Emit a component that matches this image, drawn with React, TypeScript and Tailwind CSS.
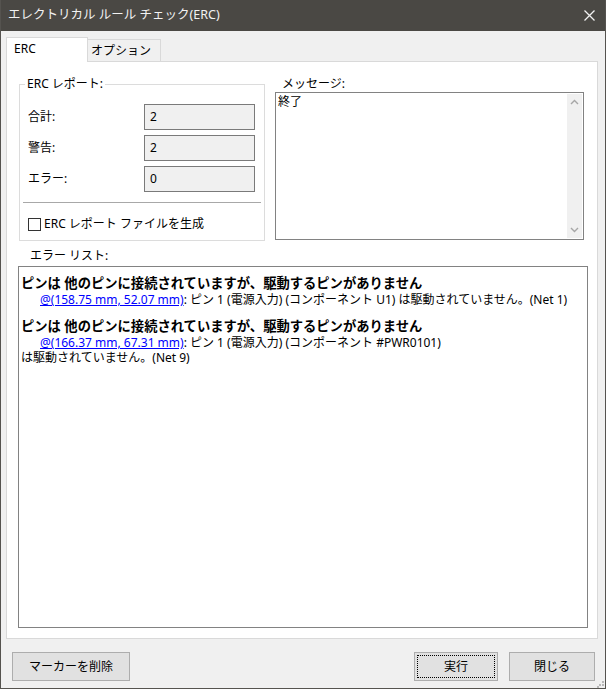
import { ReactNode } from "react";

const font = "font-['Noto_Sans','Noto_Sans_CJK_JP',sans-serif]";

function Chevron({ down }: { down?: boolean }) {
  return (
    <svg width="9" height="6" viewBox="0 0 9 6" className="block">
      <path
        d={down ? "M1 1 L4.5 4.5 L8 1" : "M1 5 L4.5 1.5 L8 5"}
        fill="none"
        stroke="#a6a6a6"
        strokeWidth="1.4"
      />
    </svg>
  );
}

function Field({ label, value }: { label: string; value: string }) {
  return (
    <div className="flex items-center justify-between">
      <span className="text-[12px] leading-[14px] text-black">{label}</span>
      <div className="w-[111px] h-[26px] border border-[#7a7a7a] bg-[#f0f0f0] flex items-center pl-[5px] text-[12px] text-black">
        {value}
      </div>
    </div>
  );
}

function Button({ children, width, focused }: { children: ReactNode; width: string; focused?: boolean }) {
  return (
    <button
      className={`${width} h-[29px] border border-[#adadad] bg-[#e1e1e1] p-[2px] text-[12px] text-black`}
    >
      <div
        className={`w-full h-full flex items-center justify-center ${
          focused ? "border border-dotted border-black" : "border border-transparent"
        }`}
      >
        {children}
      </div>
    </button>
  );
}

const errors = [
  {
    loc: "@(158.75 mm, 52.07 mm)",
    rest: ": ピン 1 (電源入力) (コンポーネント U1) は駆動されていません。(Net 1)",
    tail: "",
  },
  {
    loc: "@(166.37 mm, 67.31 mm)",
    rest: ": ピン 1 (電源入力) (コンポーネント #PWR0101)",
    tail: "は駆動されていません。(Net 9)",
  },
];

export default function App() {
  return (
    <div className={`${font} w-[606px] h-[689px] border border-[#55534f] border-t-0 bg-[#f0f0f0] flex flex-col select-none`}>
      {/* Title bar */}
      <div className="h-[31px] shrink-0 bg-[#4a4844] flex items-center justify-between pl-[7px] pr-[10px]">
        <span className="text-[12.5px] text-[#f2f2f2] leading-none">エレクトリカル ルール チェック(ERC)</span>
        <svg width="11" height="11" viewBox="0 0 11 11">
          <path d="M0.5 0.5 L10.5 10.5 M10.5 0.5 L0.5 10.5" stroke="#f2f2f2" strokeWidth="1.3" />
        </svg>
      </div>

      {/* Tabs */}
      <div className="mt-[6px] ml-[5px] flex items-end h-[24px]">
        <div className="w-[82px] h-[25px] -mb-px relative z-10 bg-white border border-b-0 border-[#d9d9d9] pl-[7px] pt-[3px] text-[12px] leading-[16px] text-black">
          ERC
        </div>
        <div className="w-[73px] h-[22px] bg-[#f0f0f0] border border-l-0 border-b-0 border-[#d9d9d9] pl-[3px] pt-[3px] text-[12px] leading-[16px] text-black">
          オプション
        </div>
      </div>

      {/* Panel */}
      <div className="ml-[5px] w-[592px] h-[578px] shrink-0 bg-white border border-[#d9d9d9] flex flex-col px-[11px] pt-[15px] pb-[10px]">
        <div className="flex gap-[10px]">
          {/* ERC report group */}
          <fieldset className="ml-[1px] w-[246px] h-[164px] border border-[#dcdcdc] px-[8px] flex flex-col">
            <legend className="-ml-[3px] px-[2px] text-[12px] leading-[14px] text-black">ERC レポート:</legend>
            <div className="mt-[13px] flex flex-col gap-[5px] pr-[1px]">
              <Field label="合計:" value="2" />
              <Field label="警告:" value="2" />
              <Field label="エラー:" value="0" />
            </div>
            <div className="mt-[10px] -mx-[5px] h-px shrink-0 bg-[#a8a8a8]" />
            <div className="mt-[14px] flex items-center gap-[3px]">
              <div className="w-[13px] h-[13px] border border-[#333333] bg-white" />
              <span className="text-[12px] leading-[14px] text-black">ERC レポート ファイルを生成</span>
            </div>
          </fieldset>

          {/* Message */}
          <div className="flex flex-col">
            <span className="ml-[7px] text-[12px] leading-[14px] text-black">メッセージ:</span>
            <div className="mt-[1px] w-[309px] h-[148px] border border-[#828282] bg-white flex p-px">
              <div className="flex-1 pl-[1px] pt-[1px] text-[12px] leading-[14px] text-black">終了</div>
              <div className="w-[15px] bg-[#f0f0f0] flex flex-col items-center justify-between py-[5px]">
                <Chevron />
                <Chevron down />
              </div>
            </div>
          </div>
        </div>

        {/* Error list */}
        <span className="mt-[8px] ml-[12px] text-[12px] leading-[14px] text-black">エラー リスト:</span>
        <div className="mt-[3px] mr-[-2px] flex-1 border border-[#828282] bg-white pl-[2px] pt-[8px] flex flex-col gap-[11px]">
          {errors.map((e, i) => (
            <div key={i} className="flex flex-col">
              <span className="text-[13.3px] leading-[17px] font-bold text-black">
                ピンは 他のピンに接続されていますが、駆動するピンがありません
              </span>
              <div className="text-[12px] leading-[15px] text-black indent-[19px]">
                <span className="text-[#0000ff] underline">{e.loc}</span>
                <span>{e.rest}</span>
                {e.tail && (
                  <>
                    <br />
                    <span className="whitespace-nowrap">{e.tail}</span>
                  </>
                )}
              </div>
            </div>
          ))}
        </div>
      </div>

      {/* Footer */}
      <div className="mt-[13px] flex items-start pl-[11px] pr-[10px] relative">
        <Button width="w-[118px]">マーカーを削除</Button>
        <div className="ml-auto flex gap-[11px]">
          <Button width="w-[84px]" focused>
            実行
          </Button>
          <Button width="w-[86px]">閉じる</Button>
        </div>
        <svg width="7" height="7" viewBox="0 0 7 7" className="absolute right-[1px] top-[29px]">
          <rect x="5" y="0" width="2" height="2" fill="#b8b8b8" />
          <rect x="2" y="3" width="2" height="2" fill="#b8b8b8" />
          <rect x="5" y="3" width="2" height="2" fill="#b8b8b8" />
          <rect x="0" y="5" width="2" height="2" fill="#b8b8b8" />
        </svg>
      </div>
    </div>
  );
}
